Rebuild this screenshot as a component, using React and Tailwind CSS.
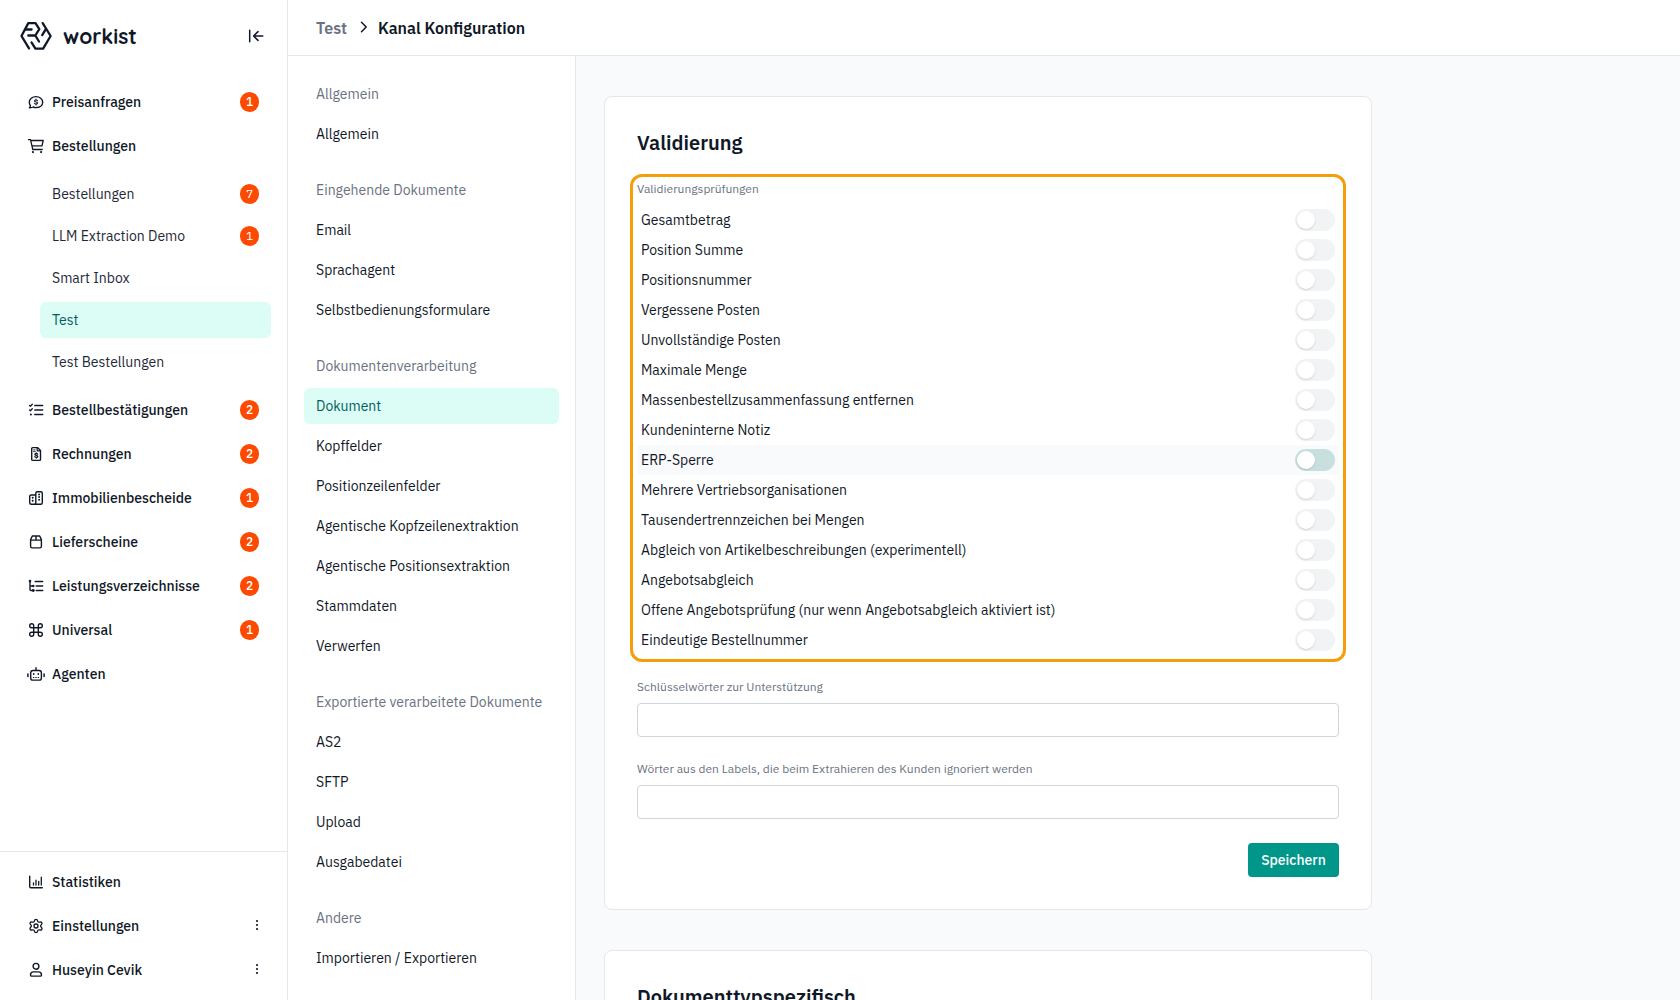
import clsx from "clsx";
import { Settings } from "lucide-react";

const Icon = ({ children }) => (
  <svg
    width="18"
    height="18"
    viewBox="0 0 18 18"
    fill="none"
    stroke="currentColor"
    strokeWidth="1.4"
    strokeLinecap="round"
    strokeLinejoin="round"
    className="shrink-0"
  >
    {children}
  </svg>
);

const icons = {
  quote: (
    <Icon>
      <path d="M2.4 14.7c.7-.7 1-1.4 1-2.2C2.7 11.6 2.3 10.5 2.3 9.3c0-3.2 3-5.7 6.7-5.7s6.7 2.5 6.7 5.7-3 5.3-6.7 5.3c-1 0-2-.2-2.9-.6-1 .6-2.3.8-3.7.7Z" />
      <path
        d="M10.5 7.7c-.3-.5-.9-.7-1.5-.7-.9 0-1.5.4-1.5 1 0 1.4 3 .7 3 2.1 0 .6-.7 1-1.5 1-.7 0-1.3-.3-1.6-.8M9 6.1V7M9 11.200v.8"
        strokeWidth="1.1"
      />
    </Icon>
  ),
  cart: (
    <Icon>
      <path d="M1.5 2.7h2l2.3 9.8h9.4M3.8 3.5h12.4L15 8.9H5.2" strokeWidth="1.3" />
      <circle cx="5.9" cy="15.1" r="1.1" fill="currentColor" stroke="none" />
      <circle cx="14.1" cy="15.1" r="1.1" fill="currentColor" stroke="none" />
    </Icon>
  ),
  checklist: (
    <Icon>
      <path d="M7.8 4.5h7.9M7.8 9h7.9M7.8 13.5h7.9" />
      <path d="m2.5 4.4.9.9 1.9-2M2.5 8.9l.9.9 1.900-2" strokeWidth="1.3" />
      <circle cx="3.9" cy="13.5" r="1" fill="currentColor" stroke="none" />
    </Icon>
  ),
  invoice: (
    <Icon>
      <path d="M4.700 3.600c0-.6.400-1 1-1h4.800l3 3v8.800c0 .6-.4 1-1 1H5.700c-.6 0-1-.4-1-1Z" />
      <path d="M10.2 2.8v3h3" strokeWidth="1.2" />
      <path d="M6.6 4.9h1.6M6.6 6.6h1.6" strokeWidth="0.9" />
      <path
        d="M10.7 9.1c-.3-.4-.8-.6-1.4-.6-.8 0-1.4.3-1.4.9 0 1.3 2.9.7 2.900 2 0 .6-.7 1-1.500 1-.7 0-1.200-.3-1.500-.7M9.300 7.800v.7M9.300 12.400v.7"
        strokeWidth="1.3"
      />
    </Icon>
  ),
  building: (
    <Icon>
      <path d="M8.500 15.300h5.300c.9 0 1.500-.6 1.500-1.500V4.200c0-.9-.6-1.500-1.500-1.500h-3.500c-.9 0-1.500.6-1.500 1.500v9.600c0 .9-.5 1.500-1.300 1.500H4.200c-.9 0-1.500-.6-1.500-1.500V7.500C2.700 6.600 3.300 6 4.200 6h4.300" />
      <path
        d="M12.1 5.400v.1M12.100 8v.1M12.100 10.600v.1M5.700 8.600v.1M5.700 11.600v.1"
        strokeWidth="1.9"
      />
    </Icon>
  ),
  box: (
    <Icon>
      <path d="M3.700 7.100h10.700M9 3v4.100M5.300 3h7.400l1.700 3.600v6.900c0 .8-.6 1.400-1.400 1.400H5c-.8 0-1.400-.6-1.400-1.400V6.600Z" />
    </Icon>
  ),
  tree: (
    <Icon>
      <path d="M8.200 4.500h7.500M9.200 9h6.500M9.200 13.500h6.500M3 4v8.500c0 .6.400 1 1 1h2.200M3 9h3.200" />
      <circle cx="3" cy="4.1" r="1.3" fill="currentColor" stroke="none" />
      <circle cx="6.3" cy="9" r="1.2" fill="currentColor" stroke="none" />
      <circle cx="6.3" cy="13.5" r="1.4" fill="currentColor" stroke="none" />
    </Icon>
  ),
  command: (
    <Icon>
      <path d="M6.700 6.700H4.700a2 2 0 1 1 2-2Zm0 0v4.600m0-4.600h4.600m-4.600 4.600v2a2 2 0 1 1-2-2Zm0 0h4.600m0 0h2a2 2 0 1 1-2 2Zm0 0V6.700m0 0v-2a2 2 0 1 1 2 2Z" />
    </Icon>
  ),
  robot: (
    <Icon>
      <path d="M6 5.500h6.200c1.200 0 2.200 1 2.200 2.200v5.200c0 1.200-1 2.200-2.200 2.200H6c-1.300 0-2.300-1-2.300-2.200V7.700c0-1.200 1-2.200 2.300-2.200ZM9 2.600v2.900" />
      <path d="M.9 9v2.500M17.100 9v2.500" strokeWidth="1.5" />
      <path d="M6.700 8.900v.2M11.300 8.900v.2" strokeWidth="1.7" />
      <path d="M6.300 12.500h.6M8.700 12.500h.6M11.100 12.500h.6" strokeWidth="1" />
    </Icon>
  ),
  chart: (
    <Icon>
      <path d="M2.700 3.200v10.300c0 .8.400 1.200 1.200 1.200h11.400" />
      <path d="M6.500 9.800V12M9 7.200V12M11.700 8.300V12M14.300 4.200V12" strokeWidth="1.3" />
    </Icon>
  ),
  gear: (
    <span className="flex size-[18px] items-center justify-center">
      <Settings size={16} strokeWidth={2} />
    </span>
  ),
  user: (
    <Icon>
      <circle cx="9" cy="5.3" r="2.9" />
      <path d="M6.600 10.900h4.800c1.800 0 3.100 1.300 3.100 3 0 .8-.5 1.200-1.200 1.200H4.700c-.7 0-1.200-.4-1.200-1.200 0-1.700 1.300-3 3.100-3Z" />
    </Icon>
  ),
};

const orderChannels = [
  { label: "Bestellungen", count: 7 },
  { label: "LLM Extraction Demo", count: 1 },
  { label: "Smart Inbox" },
  { label: "Test", active: true },
  { label: "Test Bestellungen" },
];

const mainNav = [
  { label: "Preisanfragen", icon: "quote", count: 1 },
  { label: "Bestellungen", icon: "cart", children: orderChannels },
  { label: "Bestellbestätigungen", icon: "checklist", count: 2 },
  { label: "Rechnungen", icon: "invoice", count: 2 },
  { label: "Immobilienbescheide", icon: "building", count: 1 },
  { label: "Lieferscheine", icon: "box", count: 2 },
  { label: "Leistungsverzeichnisse", icon: "tree", count: 2 },
  { label: "Universal", icon: "command", count: 1 },
  { label: "Agenten", icon: "robot" },
];

const footerNav = [
  { label: "Statistiken", icon: "chart" },
  { label: "Einstellungen", icon: "gear", menu: true },
  { label: "Huseyin Cevik", icon: "user", menu: true },
];

const settingsNav = [
  { title: "Allgemein", items: ["Allgemein"] },
  {
    title: "Eingehende Dokumente",
    items: ["Email", "Sprachagent", "Selbstbedienungsformulare"],
  },
  {
    title: "Dokumentenverarbeitung",
    items: [
      "Dokument",
      "Kopffelder",
      "Positionzeilenfelder",
      "Agentische Kopfzeilenextraktion",
      "Agentische Positionsextraktion",
      "Stammdaten",
      "Verwerfen",
    ],
  },
  {
    title: "Exportierte verarbeitete Dokumente",
    items: ["AS2", "SFTP", "Upload", "Ausgabedatei"],
  },
  { title: "Andere", items: ["Importieren / Exportieren"] },
];

const checks = [
  "Gesamtbetrag",
  "Position Summe",
  "Positionsnummer",
  "Vergessene Posten",
  "Unvollständige Posten",
  "Maximale Menge",
  "Massenbestellzusammenfassung entfernen",
  "Kundeninterne Notiz",
  "ERP-Sperre",
  "Mehrere Vertriebsorganisationen",
  "Tausendertrennzeichen bei Mengen",
  "Abgleich von Artikelbeschreibungen (experimentell)",
  "Angebotsabgleich",
  "Offene Angebotsprüfung (nur wenn Angebotsabgleich aktiviert ist)",
  "Eindeutige Bestellnummer",
];

const Badge = ({ count }) => (
  <span className="flex h-5 w-[19px] items-center justify-center rounded-full bg-[#fc4b00] text-xs text-white">
    {count}
  </span>
);

const Kebab = () => (
  <svg width="4" height="12" viewBox="0 0 4 12" fill="currentColor" className="mb-[2px]">
    <circle cx="2" cy="2" r="1.1" />
    <circle cx="2" cy="6" r="1.1" />
    <circle cx="2" cy="10" r="1.1" />
  </svg>
);

const NavItem = ({ item }) => (
  <a className="flex h-9 items-center gap-[7px] pr-[28px] pl-[27px] text-sm font-medium">
    {icons[item.icon]}
    <span className="flex-1">{item.label}</span>
    {item.count && <Badge count={item.count} />}
    {item.menu && <Kebab />}
  </a>
);

const Logo = () => (
  <div className="flex items-center gap-[11px]">
    <svg
      width="32"
      height="30"
      viewBox="0 0 32 30"
      fill="none"
      stroke="currentColor"
      strokeWidth="2.3"
      strokeLinecap="round"
      strokeLinejoin="round"
    >
      <path d="M9 27.400 1.500 15 8.300 2.100h7.200l3.800 6-4 6.400M5.800 8.500h5.800M8.300 14.500h7l3.700 6" />
      <path d="m22.700 2.100 7.900 12.900-7.500 12.700h-7.700l-3.900-6.300M25.800 8.100l-3.600 6" />
    </svg>
    <span className="pb-[1px] font-['Quicksand','Lato',sans-serif] text-[21px] leading-7 font-bold">
      workist
    </span>
  </div>
);

const Sidebar = () => (
  <aside className="flex w-72 shrink-0 flex-col border-r border-gray-200 bg-white">
    <div className="flex h-[72px] items-center justify-between pr-[23px] pl-5">
      <Logo />
      <svg
        width="16"
        height="14"
        viewBox="0 0 16 14"
        fill="none"
        stroke="currentColor"
        strokeWidth="1.5"
        strokeLinecap="round"
        strokeLinejoin="round"
      >
        <path d="M1.700 1.300v11.400M14.800 7H5.700M10 2.600 5.600 7l4.400 4.400" />
      </svg>
    </div>
    <nav className="flex flex-1 flex-col gap-2 pt-3">
      {mainNav.map((item) => (
        <div key={item.label}>
          <NavItem item={item} />
          {item.children && (
            <div className="mt-3 mb-1 flex flex-col gap-[6px] pr-4 pl-10">
              {item.children.map((child) => (
                <a
                  key={child.label}
                  className={clsx(
                    "flex h-9 items-center justify-between rounded-md px-3 text-sm",
                    child.active ? "bg-[#dcfcf6] text-teal-800" : "text-gray-800"
                  )}
                >
                  {child.label}
                  {child.count && <Badge count={child.count} />}
                </a>
              ))}
            </div>
          )}
        </div>
      ))}
    </nav>
    <div className="flex flex-col gap-2 border-t border-gray-200 py-3">
      {footerNav.map((item) => (
        <NavItem key={item.label} item={item} />
      ))}
    </div>
  </aside>
);

const SettingsNav = () => (
  <nav className="flex w-72 shrink-0 flex-col gap-5 border-r border-gray-200 bg-white px-4 pt-5 text-sm">
    {settingsNav.map((group) => (
      <div key={group.title} className="flex flex-col gap-1">
        <div className="flex h-9 items-center px-3 text-gray-500">{group.title}</div>
        {group.items.map((item) => (
          <a
            key={item}
            className={clsx(
              "flex h-9 items-center rounded-md px-3",
              item === "Dokument" && "bg-[#dcfcf6] text-teal-800"
            )}
          >
            {item}
          </a>
        ))}
      </div>
    ))}
  </nav>
);

const Toggle = ({ hovered }) => (
  <span
    className={clsx(
      "flex h-[22px] w-10 items-center rounded-full p-[2px]",
      hovered ? "bg-[#c8dfdf]" : "bg-[#f2f3f5]"
    )}
  >
    <span className="size-[18px] rounded-full bg-white shadow-[0_1px_2px_rgba(0,35,11,0.15)]" />
  </span>
);

const Field = ({ label }) => (
  <label className="block">
    <span className="block text-xs text-gray-500">{label}</span>
    <input className="mt-2 block h-[34px] w-full rounded border border-gray-300 bg-white px-3 text-sm" />
  </label>
);

const ValidationCard = () => (
  <section className="h-[814px] shrink-0 rounded-lg border border-gray-200 bg-white px-8 pt-8">
    <h2 className="text-xl leading-7 font-semibold">Validierung</h2>
    <div className="relative mt-6">
      <div className="text-xs text-gray-500">Validierungsprüfungen</div>
      <ul className="mt-2">
        {checks.map((check) => (
          <li
            key={check}
            className={clsx(
              "flex h-[30px] items-center justify-between rounded px-1 text-sm",
              check === "ERP-Sperre" && "bg-gray-50"
            )}
          >
            {check}
            <Toggle hovered={check === "ERP-Sperre"} />
          </li>
        ))}
      </ul>
      {/* highlight around the check list */}
      <div className="pointer-events-none absolute -inset-[7px] rounded-xl border-3 border-[#f59e0b]" />
    </div>
    <div className="mt-6 flex flex-col gap-6">
      <Field label="Schlüsselwörter zur Unterstützung" />
      <Field label="Wörter aus den Labels, die beim Extrahieren des Kunden ignoriert werden" />
    </div>
    <div className="mt-6 flex justify-end">
      <button className="h-[34px] w-[91px] rounded bg-teal-600 text-sm font-medium text-white">
        Speichern
      </button>
    </div>
  </section>
);

export default function App() {
  return (
    <div className="flex h-[1000px] w-[1680px] overflow-hidden bg-gray-50 font-['IBM_Plex_Sans','Roboto',sans-serif] text-gray-900">
      <Sidebar />
      <div className="flex min-w-0 flex-1 flex-col">
        <header className="flex h-14 shrink-0 items-center border-b border-gray-200 bg-white pl-7 font-semibold">
          <span className="text-gray-500">Test</span>
          <svg
            width="8"
            height="12"
            viewBox="0 0 8 12"
            fill="none"
            stroke="currentColor"
            strokeWidth="1.5"
            strokeLinecap="round"
            strokeLinejoin="round"
            className="mr-[11px] mb-[2px] ml-[13px]"
          >
            <path d="m1.500 1.300 4.700 4.700-4.700 4.700" />
          </svg>
          <span className="-ml-px">Kanal Konfiguration</span>
        </header>
        <div className="flex min-h-0 flex-1">
          <SettingsNav />
          <main className="flex w-[796px] flex-col gap-10 overflow-hidden pt-10 pl-7">
            <ValidationCard />
            <section className="h-[400px] shrink-0 rounded-lg border border-gray-200 bg-white px-8 pt-8">
              <h2 className="text-xl leading-7 font-semibold">Dokumenttypspezifisch</h2>
            </section>
          </main>
        </div>
      </div>
    </div>
  );
}
